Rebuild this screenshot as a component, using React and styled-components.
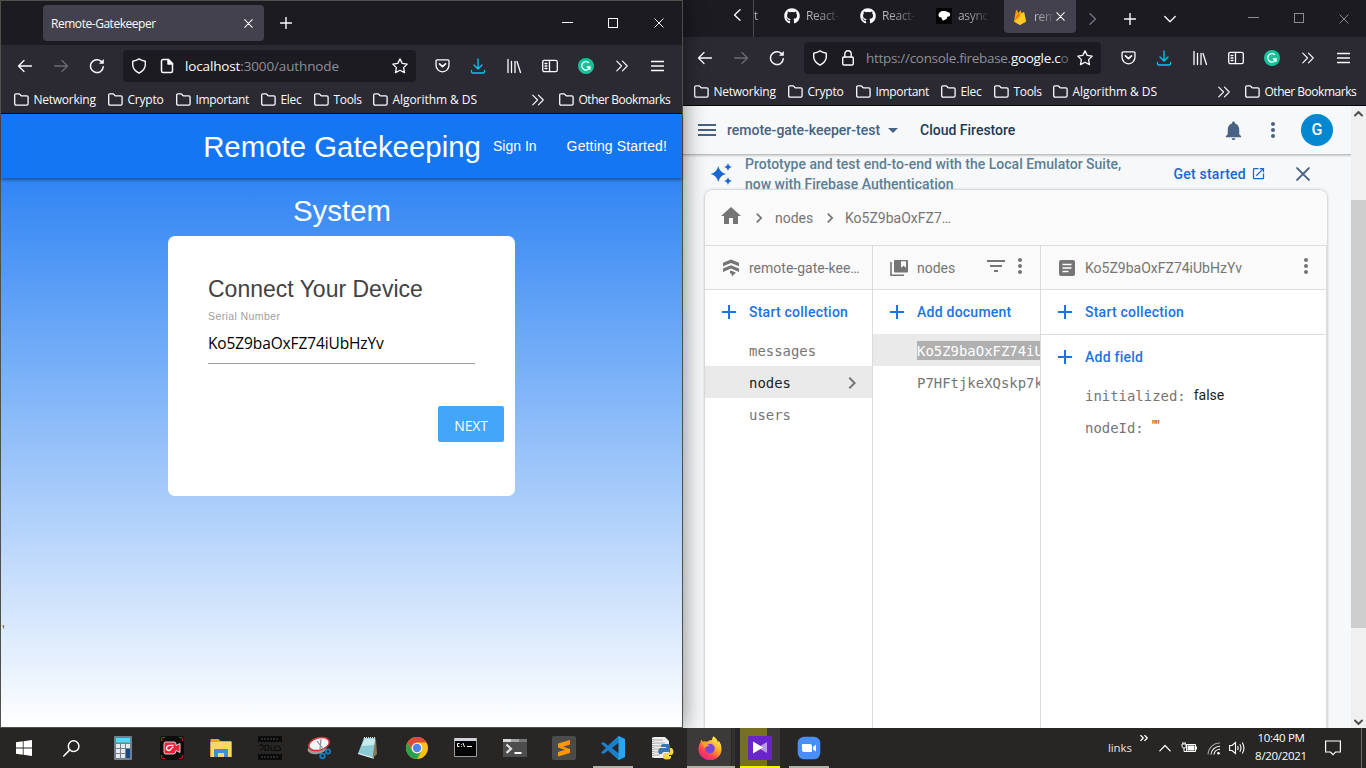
import React from "react";
import styled, { createGlobalStyle, css } from "styled-components";
import { FaGithub } from "react-icons/fa";
import {
  MdHome, MdChevronRight, MdFilterList, MdMoreVert, MdNotifications,
  MdOpenInNew, MdArrowDropDown, MdMenu, MdAdd,
} from "react-icons/md";

const ui = `"Open Sans", "Noto Sans", sans-serif`;
const arial = `"Liberation Sans", Arial, sans-serif`;
const roboto = `Roboto, sans-serif`;
const mono = `"DejaVu Sans Mono", "Liberation Mono", monospace`;

const GlobalStyle = createGlobalStyle`
  * { box-sizing: border-box; }
  body { margin: 0; overflow: hidden; background: #272625; }
  svg { display: block; flex: none; }
`;

const Screen = styled.div`
  width: 1366px;
  height: 768px;
  display: grid;
  grid-template-rows: 728px 40px;
  overflow: hidden;
  font-family: ${ui};
`;
const Desktop = styled.div`
  display: grid;
  grid-template-columns: 683px 683px;
  overflow: hidden;
`;
const Window = styled.section`
  display: flex;
  flex-direction: column;
  min-width: 0;
  height: 728px;
  background: #2b2a33;
  ${(p) => p.$front && css`
    position: relative;
    z-index: 2;
    border: 1px solid #4f504c;
    box-shadow: 0 0 22px rgba(0, 0, 0, 0.48);
  `}
`;

/* ---------- browser chrome ---------- */
const TabBar = styled.div`
  display: flex;
  flex: none;
  align-items: center;
  height: ${(p) => p.$h}px;
  background: #1c1b22;
`;
const WideTab = styled.div`
  display: flex;
  align-items: center;
  justify-content: space-between;
  width: 221px;
  height: 36px;
  margin-left: 42px;
  padding: 0 11px 0 8px;
  border-radius: 4px;
  background: #42414d;
  color: #fbfbfe;
  font-size: 12px;
  letter-spacing: -0.46px;
`;
const Cell = styled.div`
  display: flex;
  flex: none;
  align-items: center;
  justify-content: center;
  width: ${(p) => p.$w}px;
  height: 100%;
  color: ${(p) => p.$c || "#fbfbfe"};
`;
const Spacer = styled.div`
  flex: 1;
`;
const ScrollLeft = styled(Cell)`
  justify-content: flex-end;
  padding: 0 10px 7px 0;
  border-right: 1px solid #4a4950;
`;
const SmallTab = styled.div`
  display: flex;
  align-items: center;
  gap: 6px;
  width: ${(p) => p.$w}px;
  height: 32px;
  margin-bottom: 6px;
  color: #fbfbfe;
  font-size: 12px;
`;
const FadedTitle = styled.span`
  width: ${(p) => p.$w}px;
  white-space: nowrap;
  color: transparent;
  letter-spacing: -0.3px;
  background: linear-gradient(90deg, #c4c4c9, #8f8e95 50%, rgba(100, 100, 105, 0.05) 90%);
  background-clip: text;
  -webkit-background-clip: text;
`;
const ActiveTab = styled(SmallTab)`
  height: 37px;
  margin-bottom: 8px;
  padding: 4px 0 0 8px;
  border-radius: 4px;
  background: #42414d;
`;
const TabClose = styled.div`
  margin-left: -7px;
`;
const NavBar = styled.div`
  display: flex;
  flex: none;
  align-items: center;
  height: 41px;
  padding: ${(p) => p.$pad};
`;
const UrlBar = styled.div`
  display: flex;
  align-items: center;
  flex: 1;
  min-width: 0;
  height: 32px;
  margin: 0 ${(p) => p.$mr}px 0 ${(p) => p.$ml}px;
  padding: 0 8px 0 8px;
  border-radius: 4px;
  background: #1c1b22;
`;
const UrlText = styled.span`
  flex: 1;
  min-width: 0;
  margin: 1px 0 0 10px;
  white-space: nowrap;
  font-size: 13.5px;
  letter-spacing: ${(p) => p.$ls}px;
  color: #8f8f97;
  b { font-weight: 400; color: #fbfbfe; }
  i { font-style: normal; color: #6b6a72; }
`;
const UrlIcon = styled.div`
  display: flex;
  flex: none;
  justify-content: center;
  width: 16px;
  margin-right: ${(p) => p.$mr || 0}px;
  color: #fbfbfe;
`;
const Bookmarks = styled.div`
  display: flex;
  flex: none;
  align-items: center;
  height: 28px;
  padding: 0 ${(p) => p.$r}px 0 ${(p) => p.$l}px;
  border-bottom: 1px solid #08080a;
`;
const Bookmark = styled.div`
  display: flex;
  flex: none;
  align-items: center;
  gap: 4.5px;
  width: ${(p) => p.$w}px;
  white-space: nowrap;
  color: #fbfbfe;
  font-size: 12px;
  letter-spacing: ${(p) => p.$ls}px;
`;

const Svg = ({ s = 16, w, h, vb, sw = 1.3, children, ...rest }) => (
  <svg width={w || s} height={h || s} viewBox={vb || "0 0 16 16"} fill="none"
    stroke="currentColor" strokeWidth={sw} strokeLinecap="round" strokeLinejoin="round" {...rest}>
    {children}
  </svg>
);
const Back = () => <Svg><path d="M1.5 8h13M7 2.5 1.5 8 7 13.5" /></Svg>;
const Forward = () => <Svg><path d="M14.5 8h-13M9 2.5 14.5 8 9 13.5" /></Svg>;
const Reload = () => (
  <Svg sw={1.5}><path d="M14.3 8.8A6.4 6.4 0 1 1 12.2 3.4" /><path d="M14.8 1v4.8H10z" fill="currentColor" stroke="none" /></Svg>
);
const Shield = () => <Svg sw={1.4}><path d="M8 .9q3 2 5.800 2.100.5 0 .5.600v3C14.300 10.400 11.900 13.200 8 15.200 4.100 13.200 1.700 10.400 1.700 6.600v-3q0-.6.5-.6Q5 2.900 8 .900z" /></Svg>;
const Page = () => <Svg sw={1.5}><path d="M9.500 1.500H4A1.500 1.500 0 0 0 2.500 3v10A1.500 1.500 0 0 0 4 14.500h8a1.500 1.500 0 0 0 1.500-1.500V5.500z" /><path d="M9 1.500v4.500h4.500z" fill="currentColor" /></Svg>;
const Lock = () => <Svg sw={1.4}><rect x="2.7" y="7" width="10.6" height="8" rx="1.3" /><path d="M4.800 7V4a3.200 3.200 0 0 1 6.400 0v3" /></Svg>;
const Star = () => <Svg><path d="m8 .9 2.200 4.500 5 .7-3.600 3.500.9 5L8 12.200l-4.500 2.400.9-5L.8 6.100l5-.7z" /></Svg>;
const Pocket = () => <Svg s={15} sw={1.4}><path d="M2.300 2h11.400c.7 0 1.200.5 1.200 1.200v4.600a6.900 6.900 0 0 1-13.800 0V3.200C1.100 2.500 1.600 2 2.300 2z" /><path d="M4.800 6.200 8 9.300l3.200-3.100" strokeWidth="1.800" /></Svg>;
const Download = () => <Svg><path d="M8 .8v10M4 7l4 4 4-4M1.500 12.500v1.200c0 .8.5 1.300 1.300 1.300h10.400c.8 0 1.300-.5 1.300-1.300v-1.200" /></Svg>;
const Library = () => <Svg><path d="M2 1.500v13M5.500 3.500v11M9 3.500v11M11 3.500l3.500 11" /></Svg>;
const Sidebar = () => <Svg><rect x=".7" y="2.3" width="14.6" height="11.4" rx="1.6" /><path d="M7.500 2.500v11M3 5.500h2M3 8h2M3 10.500h2" /></Svg>;
const Grammarly = () => (
  <svg width="16" height="16" viewBox="0 0 16 16">
    <circle cx="8" cy="8" r="8" fill="#15c39a" />
    <path d="M10.900 4.800A4.200 4.200 0 1 0 12 9H8.800M12 8.700v3" fill="none" stroke="#fff" strokeWidth="1.3" />
  </svg>
);
const More = () => <Svg w={14} h={14}><path d="M2 2.500 7.500 8 2 13.500M8.500 2.500 14 8l-5.500 5.500" /></Svg>;
const Burger = () => <Svg w={13} h={16} vb="1.5 0 13 16"><path d="M2 3.500h12M2 8h12M2 12.500h12" /></Svg>;
const Folder = () => (
  <Svg w={15} h={13} vb="0 0 15 13">
    <path d="M.7 10.800V2c0-.7.5-1.200 1.200-1.200H5c1.300 0 1.300 2 2.600 2h5.200c.8 0 1.300.5 1.300 1.200v6.800c0 .8-.5 1.300-1.300 1.300H2C1.200 12.100.7 11.600.7 10.800z" />
  </Svg>
);
const Cross = ({ s = 9, sw = 1.2 }) => <Svg s={s} vb="0 0 10 10" sw={sw}><path d="M.8.8 9.200 9.200M9.200.8.8 9.200" /></Svg>;
const Plus = () => <Svg s={12} vb="0 0 12 12" sw={1.4}><path d="M6 .5v11M.5 6h11" /></Svg>;
const Min = () => <Svg w={11} h={11} vb="0 0 11 11" sw={1} shapeRendering="crispEdges"><path d="M.5 4.500h10" /></Svg>;
const Max = () => <Svg w={11} h={11} vb="0 0 11 11" sw={1} shapeRendering="crispEdges"><path d="M.5.5h9v9h-9z" /></Svg>;
const chevrons = { l: "M9 .8 3.500 6 9 11.200", r: "M3 .8 8.500 6 3 11.200", d: "M.8 3.500 6 8.700l5.200-5.200" };
const Chev = ({ dir }) => <Svg w={12} h={12} vb="0 0 12 12"><path d={chevrons[dir]} /></Svg>;

const Toolbar = ({ pad, ml, mr, children }) => (
  <NavBar $pad={pad}>
    <Cell $w={36}><Back /></Cell>
    <Cell $w={36} $c="#6c6b73"><Forward /></Cell>
    <Cell $w={36}><Reload /></Cell>
    <UrlBar $ml={ml} $mr={mr}>{children}<UrlIcon><Star /></UrlIcon></UrlBar>
    <Cell $w={36}><Pocket /></Cell>
    <Cell $w={36} $c="#00c8ee"><Download /></Cell>
    <Cell $w={36}><Library /></Cell>
    <Cell $w={36}><Sidebar /></Cell>
    <Cell $w={36}><Grammarly /></Cell>
    <Cell $w={35}><More /></Cell>
    <Cell $w={37}><Burger /></Cell>
  </NavBar>
);
const bookmarks = [
  ["Networking", 94, -0.25], ["Crypto", 68, -0.22], ["Important", 85, -0.33],
  ["Elec", 53, -0.3], ["Tools", 59, -0.35], ["Algorithm & DS", 120, -0.06],
];
const BookmarkBar = ({ l, r }) => (
  <Bookmarks $l={l} $r={r}>
    {bookmarks.map(([t, w, ls]) => <Bookmark key={t} $w={w} $ls={ls}><Folder />{t}</Bookmark>)}
    <Spacer />
    <Cell $w={43}><More /></Cell>
    <Bookmark $w={112} $ls={-0.48}><Folder />Other Bookmarks</Bookmark>
  </Bookmarks>
);

/* ---------- device page ---------- */
const DevicePage = styled.main`
  flex: 1;
  font-family: ${arial};
  background: linear-gradient(#1877f2, #ffffff);
`;
const SiteHeader = styled.header`
  display: flex;
  height: 64px;
  padding-left: 202px;
  background: #1476f2;
  box-shadow: 0 2px 3px rgba(0, 0, 0, 0.38);
  color: #fff;
  line-height: 64px;
  white-space: nowrap;
`;
const Brand = styled.div`
  width: 278px;
  padding-top: 1px;
  font-size: 29.4px;
  text-align: center;
  white-space: normal;
`;
const NavLink = styled.a`
  margin-left: ${(p) => p.$ml}px;
  font-size: 14px;
  letter-spacing: ${(p) => p.$ls}px;
`;
const Card = styled.div`
  display: flex;
  flex-direction: column;
  width: 347px;
  height: 260px;
  margin: 58px 0 0 167px;
  padding: 39px 11px 0 40px;
  border-radius: 7px;
  background: #fff;
`;
const CardTitle = styled.h1`
  margin: 0;
  font-size: 23px;
  line-height: 28px;
  font-weight: 400;
  color: #424242;
`;
const FieldLabel = styled.label`
  margin-top: 6px;
  font-size: 10.5px;
  line-height: 14px;
  letter-spacing: 0.4px;
  color: #9e9e9e;
`;
const Field = styled.div`
  width: 267px;
  height: 41px;
  border-bottom: 1px solid #9e9e9e;
  font: 15.5px/41px ${ui};
  letter-spacing: -0.12px;
  color: #000;
`;
const NextButton = styled.button`
  align-self: flex-end;
  width: 66px;
  height: 36px;
  margin-top: 42px;
  padding: 2px 0 0;
  border: 0;
  border-radius: 2px;
  background: #42a5f5;
  color: #fff;
  font: 14px ${ui};
  letter-spacing: -0.2px;
`;
const Speck = styled.div`
  margin-top: 122px;
  padding-left: 1px;
  height: 12px;
  font: bold 10px/12px ${arial};
  color: #8a6238;
`;

/* ---------- firestore console ---------- */
const Console = styled.main`
  display: grid;
  grid-template-columns: 668px 15px;
  flex: 1;
  min-height: 0;
  background: #f6f8fa;
  font: 14px/20px ${roboto};
`;
const ConsoleBody = styled.div`
  display: flex;
  flex-direction: column;
  min-height: 0;
  overflow: hidden;
`;
const ConsoleHeader = styled.header`
  display: flex;
  flex: none;
  align-items: center;
  height: 49px;
  padding: 0 18px 0 12px;
  border-bottom: 1px solid #bcbebf;
  box-shadow: 0 1px 2px rgba(0, 0, 0, 0.18);
  color: #476282;
  font-weight: 500;
`;
const ProjectName = styled.span`
  margin-left: 8px;
  width: 154px;
  white-space: nowrap;
`;
const PageName = styled.span`
  margin-left: 15px;
  flex: 1;
  color: #1b3a57;
`;
const Avatar = styled.div`
  display: grid;
  place-items: center;
  width: 32px;
  height: 32px;
  margin-left: 8px;
  border-radius: 50%;
  background: #0288d1;
  color: #fff;
  font-size: 16px;
`;
const Banner = styled.div`
  display: flex;
  align-items: center;
  flex: none;
  height: 35px;
  padding: 2px 41px 0 26px;
`;
const BannerText = styled.p`
  width: 440.5px;
  margin: 0;
  padding: 0 40px 0 12px;
  font-weight: 500;
  color: #5d7f92;
`;
const StartLink = styled.a`
  display: flex;
  align-items: center;
  gap: 5px;
  flex: 1;
  font-weight: 500;
  letter-spacing: 0.22px;
  color: #1967d2;
`;
const Panel = styled.div`
  position: relative;
  display: flex;
  flex-direction: column;
  flex: 1;
  width: 622px;
  margin-left: 22px;
  border-radius: 8px 8px 0 0;
  background: #fff;
  box-shadow: 0 0 3px rgba(0, 0, 0, 0.32);
  color: #757575;
`;
const Breadcrumb = styled.div`
  display: flex;
  align-items: center;
  height: 56px;
  padding-left: 14px;
  border-bottom: 1px solid #dcdcdc;
  border-radius: 8px 8px 0 0;
  background: #fafafa;
  > svg { margin-bottom: 4px; }
`;
const Crumb = styled.span`
  width: ${(p) => p.$w}px;
  overflow: hidden;
  white-space: nowrap;
  text-overflow: ellipsis;
`;
const Columns = styled.div`
  display: grid;
  grid-template-columns: 168px 168px 286px;
  flex: 1;
`;
const Column = styled.div`
  overflow: hidden;
  border-right: 1px solid #dcdcdc;
`;
const ColumnHead = styled.div`
  display: flex;
  align-items: center;
  height: 44px;
  padding: 0 ${(p) => p.$r || 12}px 0 16px;
  border-bottom: 1px solid #dcdcdc;
  background: #fafafa;
  white-space: nowrap;
  span { flex: 1; margin-left: 8px; overflow: hidden; text-overflow: ellipsis; }
  span ~ svg { margin-bottom: 3px; }
`;
const Action = styled.button`
  display: flex;
  align-items: center;
  gap: 8px;
  width: 100%;
  height: 45px;
  padding: 0 0 0 12px;
  border: 0;
  border-bottom: 1px solid ${(p) => (p.$line ? "#dcdcdc" : "transparent")};
  background: none;
  color: #1a73e8;
  font: 500 14px/20px ${roboto};
  letter-spacing: 0.24px;
`;
const Entry = styled.div`
  display: flex;
  align-items: center;
  height: 32px;
  padding: 1px 0 0 44px;
  white-space: nowrap;
  font-family: ${mono};
  font-size: 13.95px;
  color: ${(p) => (p.$dark ? "#212121" : "#757575")};
  background: ${(p) => (p.$on ? "#eaeaea" : "none")};
  span { flex: 1; }
  mark { padding-top: 1px; background: #b0b0b0; color: #fff; line-height: 18px; }
`;
const EntryList = styled.div`
  margin-top: -1px;
`;
const FieldValue = styled.span`
  margin-left: 8px;
  padding-bottom: 2px;
  font: 14px/20px ${roboto};
  color: #212121;
`;
const StringValue = styled(FieldValue)`
  padding-bottom: 3px;
  font-weight: 500;
  letter-spacing: -0.4px;
  color: #b8621b;
`;
const ScrollTrack = styled.div`
  display: flex;
  flex-direction: column;
  justify-content: space-between;
  align-items: center;
  padding: 4px 0 2px;
  background: #f0f0f0;
  color: #505050;
`;
const ScrollThumb = styled.div`
  width: 15px;
  height: 428px;
  margin: -9px 0 0;
  background: #cdcdcd;
`;

const Sparkle = () => (
  <svg width="24" height="24" viewBox="0 0 24 24" fill="#1967d2">
    <path d="M9.300 4Q10.800 10.500 17 12q-6.200 1.500-7.700 8Q7.800 13.500 1.600 12 7.800 10.500 9.300 4zM19 1q.7 3.300 4 4-3.300.7-4 4-.7-3.300-4-4 3.300-.7 4-4zM19 15q.7 3.300 4 4-3.300.7-4 4-.7-3.300-4-4 3.300-.7 4-4z" />
  </svg>
);
const FirestoreIcon = () => (
  <svg width="20" height="18" viewBox="0 0 20 18" fill="#757575">
    <path d="M10 .5 18 3.800v3.500L10 4 2 7.300V3.800zM10 6.300l8 3.300v3.300L10 9.600l-8 3.300V9.600zM10 11.600l5 2.100-4.300 3.800V15L9 14.300v-2.200z" />
  </svg>
);
const CollectionIcon = () => (
  <svg width="20" height="18" viewBox="0 0 20 18">
    <path d="M2 3v13.200h13" fill="none" stroke="#757575" strokeWidth="1.6" />
    <path d="M6 1h12q1 0 1 1v10.500q0 1-1 1H6q-1 0-1-1V2q0-1 1-1zm6 1.200v6.500l2.500-1.900L17 8.700V2.200z" fill="#757575" fillRule="evenodd" />
  </svg>
);
const DocIcon = () => (
  <svg width="20" height="16" viewBox="0 0 20 16">
    <rect x="2" width="16" height="16" rx="2" fill="#757575" />
    <path d="M5.500 4.500h9M5.500 8h9M5.500 11.500h6" stroke="#fff" strokeWidth="1.4" />
  </svg>
);

/* ---------- taskbar ---------- */
const Taskbar = styled.footer`
  display: flex;
  height: 40px;
  background: #272625;
  color: #fff;
  font-size: 12px;
`;
const TaskCell = styled.div`
  display: flex;
  flex: none;
  align-items: center;
  justify-content: center;
  width: ${(p) => p.$w || 49}px;
  padding-right: ${(p) => p.$pr || 0}px;
`;
const RunningApp = styled.div`
  display: flex;
  align-items: center;
  justify-content: center;
  width: ${(p) => p.$w || 40}px;
  height: 40px;
  padding-top: 2px;
  padding-right: ${(p) => p.$pr || 0}px;
  border-bottom: 2px solid ${(p) => p.$line || "#b3afa9"};
  background: ${(p) => p.$bg || "none"};
`;
const TrayLabel = styled.div`
  width: 32px;
  line-height: 40px;
  font-size: 11.5px;
  letter-spacing: -0.1px;
  color: #e4e4e4;
`;
const TrayChevrons = styled.div`
  width: 16px;
  padding-top: 7px;
`;
const Clock = styled.div`
  width: 62px;
  padding-top: 1px;
  font-size: 11.5px;
  line-height: 18px;
  letter-spacing: -0.3px;
  text-align: center;
  white-space: nowrap;
`;
const ShowDesktop = styled.div`
  width: 5px;
  border-left: 1px solid #6c6b6a;
`;

const I = ({ s = 24, children }) => <svg width={s} height={s} viewBox="0 0 24 24" fill="none">{children}</svg>;
const appIcons = [
  <I><rect x="3" y="0" width="18" height="24" rx="1" fill="#74818c" /><rect x="5" y="2" width="14" height="4.5" fill="#4ddcff" />
    <path d="M5 8h4v4H5zM10 8h4v4h-4zM15 8h4v4h-4zM5 13h4v4H5zM10 13h4v4h-4zM5 18h4v4H5zM10 18h4v4h-4z" fill="#e4eaee" /><path d="M15 13h4v9h-4z" fill="#104a88" /></I>,
  <I><rect width="24" height="24" rx="3" fill="#0c0c0c" /><path d="M1.500 5V3q0-1.500 1.500-1.500h2M19 1.500h2q1.500 0 1.500 1.500v2M1.500 19v2q0 1.500 1.500 1.500h2M19 22.500h2q1.500 0 1.500-1.500v-2" stroke="#b32625" strokeWidth="1.2" />
    <path d="M5.500 6H14q2 0 2 2v1.500l4-2v9l-4-2q0 3.500-2.500 3.500h-8Q4 18 4 16V8q0-2 1.500-2z" fill="#e22338" stroke="#fff" strokeWidth=".8" />
    <path d="M13.500 9.500Q7 8.500 6.500 12q0 2.500 2.500 2.500 1.500 0 2.500-2.200 1-1.300 2-.8" stroke="#fff" strokeWidth="1.3" /></I>,
  <I><path d="M1.500 3h8l2 2h11v16h-21z" fill="#e9a61c" /><path d="M1.500 6h21v15h-21z" fill="#fcd669" /><path d="M5 21v-8h14v8h-4v-4H9v4z" fill="#3f8fd2" /></I>,
  <I><path d="M0 0h24v6H0zM0 18h24v6H0z" fill="#0b0b0b" /><path d="M3 3h18M3 21h18" stroke="#343434" strokeWidth="1.5" strokeDasharray="2 1" />
    <path d="M1 10q3-3 4 0t-3 4M7 9.500q4-1 4 2t-4 3zM13 9.500v5h4v-5M19 9.500q5 2 3 5h-4" stroke="#0b0b0b" strokeWidth="1.1" /></I>,
  <I><ellipse cx="10" cy="13" rx="9.5" ry="5" fill="#999b9e" transform="rotate(-8 10 13)" /><ellipse cx="12" cy="8" rx="10.5" ry="6.2" fill="#f5f6f8" stroke="#cf2f35" strokeWidth="1.5" transform="rotate(-15 12 8)" />
    <path d="M10 5l7 9M14 3l-1 10" stroke="#8a8f96" strokeWidth="1.2" /><circle cx="15.5" cy="20" r="2.3" stroke="#1781c8" strokeWidth="1.7" /><circle cx="21" cy="15.5" r="2.2" stroke="#1781c8" strokeWidth="1.7" /></I>,
  <I><path d="M7 2 20 4l1 14-4 4z" fill="#8b7750" /><path d="M8 2h11.500l-3 20L2 17.500z" fill="#8ccbd4" /><path d="M8.500 3h10.500l-1 6L5.500 10z" fill="#c7eaee" /><path d="M2 17.500 17 22l1 0" stroke="#f0f6f6" strokeWidth="1.2" /><path d="M8 1.800h12" stroke="#dfe5e5" strokeWidth="1.4" strokeDasharray="1 1" /></I>,
  <I><circle cx="12" cy="12" r="11" fill="#fbc116" /><path d="M2.500 6.500A11 11 0 0 1 21.500 6.500H12a5.500 5.500 0 0 0-5 7.500z" fill="#de4a3c" /><path d="M2.500 6.500A11 11 0 0 0 12 23l4.500-8a5.500 5.500 0 0 1-9.500-.5z" fill="#27a050" />
    <circle cx="12" cy="12" r="5.3" fill="#fff" /><circle cx="12" cy="12" r="4.2" fill="#4a86ee" /></I>,
  <I><path d="M.5 2.500h22v18H.5z" fill="#050505" stroke="#9b9da0" strokeWidth="1" /><path d="M.5 2h22v3H.5z" fill="#d0d4d8" /><path d="M5.500 7.500h-2v3h2M7.500 8v.7M7.500 10v.7M9 7l1.500 4M13 10.500h5" stroke="#fff" strokeWidth="1" /></I>,
  <I><path d="M0 3h24v18H0z" fill="#4d4d4d" /><path d="M0 3h16v3H0z" fill="#dadada" /><path d="M8 3h8v3H8z" fill="#a3a3a3" /><path d="M16 3h8v3h-8z" fill="#777" /><path d="m3.500 8.500 4.500 4.200-4.500 4.200" stroke="#e3e3e3" strokeWidth="2.2" /><path d="M11.500 17h7" stroke="#fff" strokeWidth="2" /></I>,
  <I><rect width="24" height="24" rx="2" fill="#4b4b4b" /><path d="M18 4v4.500l-7 2.300 7 2.200v4L6 20.500V16l7-2.200-7-2.300V7.500z" fill="#ff9800" /></I>,
];
const VsCode = () => <I><path d="M17.500 0 24 3v18l-6.500 3L7 14.500 2.500 18 0 16.500 5 12 0 7.500 2.500 6 7 9.500zM18 6.500 11 12l7 5.500z" fill="#1b80c9" fillRule="evenodd" /><path d="M17.500 0 24 3v18l-6.500 3z" fill="#2ba5f0" /></I>;
const PyFile = () => (
  <I><path d="M2 1h13l4 4v17H2z" fill="#efefef" /><path d="M4 4h9M4 7h11M4 10h12M4 13h8M4 16h6M4 19h6" stroke="#a9a9a9" strokeWidth="1" /><path d="M3 1v21" stroke="#666" strokeDasharray="1 1" />
    <path d="M13 8h5q2 0 2 2v4q0 2-2 2h-4q-2 0-2 2H9q-2-4 1-6h6v-1h-5V10q0-2 2-2z" fill="#3a75ab" /><path d="M20 12h2q3 4 0 7h-5v1h4v2q-1 1.500-4 1.500T13 22v-3q0-2 2-2h3q2 0 2-2z" fill="#fbd343" /></I>
);
const Firefox = () => (
  <I><defs>
    <linearGradient id="ff" x1="19" y1="2" x2="5" y2="22" gradientUnits="userSpaceOnUse"><stop stopColor="#fff14a" /><stop offset=".45" stopColor="#ff9a2a" /><stop offset=".75" stopColor="#ff4155" /><stop offset="1" stopColor="#f0257f" /></linearGradient></defs>
    <path d="M15.500.2q4 3 4.300 5.800 1-.2 1-1.500 3 4.500 2.700 9A11.500 11 0 0 1 .5 13q0-4 2-6.500L3 3.500l2 2.200q2-1 4 0Q11 4 14 4q0-2 1.500-3.800z" fill="url(#ff)" />
    <circle cx="12" cy="12.500" r="4.800" fill="#7a46d8" /><path d="M3 6q5 0 8.500 4-4 0-5 2-1-4-3.500-6z" fill="#ff9f2e" /></I>
);
const Player = () => <I><rect width="24" height="24" rx="1.5" fill="#6a24cc" /><path d="M19 6v11l-9-5.500z" fill="#b99be6" /><path d="M5 5.500v12l10-6z" fill="#fff" /></I>;
const ZoomApp = () => <I><rect x=".7" y=".7" width="22.6" height="22.6" rx="6.5" fill="#4a8ff7" /><path d="M5 8h8q2 0 2 2v6H7q-2 0-2-2zM16 11l3-2.500v7L16 13.500z" fill="#fff" /></I>;

export default function App() {
  return (
    <>
      <GlobalStyle />
      <Screen>
        <Desktop>
          <Window $front>
            <TabBar $h={44}>
              <WideTab>Remote-Gatekeeper<Cross /></WideTab>
              <Cell $w={43}><Plus /></Cell>
              <Spacer />
              <Cell $w={46}><Min /></Cell>
              <Cell $w={46}><Max /></Cell>
              <Cell $w={46}><Cross s={10} sw={1} /></Cell>
            </TabBar>
            <Toolbar pad="0 6px 0 6px" ml={8} mr={8}>
              <UrlIcon $mr={12}><Shield /></UrlIcon>
              <UrlIcon><Page /></UrlIcon>
              <UrlText $ls={-0.14}><b>localhost</b>:3000/authnode</UrlText>
            </Toolbar>
            <BookmarkBar l={13} r={11} />
            <DevicePage>
              <SiteHeader>
                <Brand>Remote Gatekeeping System</Brand>
                <NavLink $ml={12} $ls={0}>Sign In</NavLink>
                <NavLink $ml={30} $ls={0.15}>Getting Started!</NavLink>
              </SiteHeader>
              <Card>
                <CardTitle>Connect Your Device</CardTitle>
                <FieldLabel>Serial Number</FieldLabel>
                <Field>Ko5Z9baOxFZ74iUbHzYv</Field>
                <NextButton>NEXT</NextButton>
              </Card>
              <Speck>,</Speck>
            </DevicePage>
          </Window>

          <Window>
            <TabBar $h={37}>
              <ScrollLeft $w={71}><Chev dir="l" /></ScrollLeft>
              <SmallTab $w={30}><FadedTitle $w={9}>t</FadedTitle></SmallTab>
              <SmallTab $w={76}><FaGithub size={16} /><FadedTitle $w={38}>React-</FadedTitle></SmallTab>
              <SmallTab $w={76}><FaGithub size={16} /><FadedTitle $w={38}>React-</FadedTitle></SmallTab>
              <SmallTab $w={68}>
                <svg width="16" height="16" viewBox="0 0 16 16"><path d="M0 0h16v16H0z" fill="#000" /><path d="M2.500 6.500q1-4 5.500-3.500t6 2.500q1 2.500-3 3.500v1.500L8.500 12q-1.500 1-2.500-.5l-.5-2Q2 9.500 2.500 6.500z" fill="#fff" /></svg>
                <FadedTitle $w={34}>async</FadedTitle>
              </SmallTab>
              <ActiveTab $w={72}>
                <svg width="16" height="16" viewBox="0 0 16 16"><path d="M2 12.500 4 1q.3-.7.7 0L6.500 4 8 1.800q.4-.5.7 0l1.500 3 1.800-1.500L14 12.500 8 16z" fill="#ffa000" /><path d="m2 12.500 8-8.500 2-1 2 9.500L8 16z" fill="#ffca28" /><path d="m2 12.500 4.500-8.500L8 7z" fill="#f57c00" /></svg>
                <FadedTitle $w={23}>rem</FadedTitle>
                <TabClose><Cross /></TabClose>
              </ActiveTab>
              <Cell $w={34} $c="#77767d"><Chev dir="r" /></Cell>
              <Cell $w={40}><Plus /></Cell>
              <Cell $w={40}><Chev dir="d" /></Cell>
              <Spacer />
              <Cell $w={46} $c="#8b8a90"><Min /></Cell>
              <Cell $w={46} $c="#8b8a90"><Max /></Cell>
              <Cell $w={44} $c="#8b8a90"><Cross s={10} sw={1} /></Cell>
            </TabBar>
            <Toolbar pad="0 4px 0 4px" ml={9} mr={9}>
              <UrlIcon $mr={12}><Shield /></UrlIcon>
              <UrlIcon><Lock /></UrlIcon>
              <UrlText $ls={-0.3}>https://console.firebase.<b>google.c</b><i>o</i></UrlText>
            </Toolbar>
            <BookmarkBar l={11} r={9} />
            <Console>
              <ConsoleBody>
                <ConsoleHeader>
                  <MdMenu size={24} />
                  <ProjectName>remote-gate-keeper-test</ProjectName>
                  <MdArrowDropDown size={24} />
                  <PageName>Cloud Firestore</PageName>
                  <Cell $w={40} $c="#476282"><MdNotifications size={23} /></Cell>
                  <Cell $w={40} $c="#476282"><MdMoreVert size={24} /></Cell>
                  <Avatar>G</Avatar>
                </ConsoleHeader>
                <Banner>
                  <Sparkle />
                  <BannerText>Prototype and test end-to-end with the Local Emulator Suite, now with Firebase Authentication</BannerText>
                  <StartLink>Get started<MdOpenInNew size={15} /></StartLink>
                  <Cell $w={14} $c="#476282"><Cross s={14} sw={1.4} /></Cell>
                </Banner>
                <Panel>
                  <Breadcrumb>
                    <MdHome size={24} />
                    <Cell $w={32} $c="#757575"><MdChevronRight size={20} /></Cell>
                    <Crumb $w={40}>nodes</Crumb>
                    <Cell $w={30} $c="#757575"><MdChevronRight size={20} /></Cell>
                    <Crumb $w={108}>Ko5Z9baOxFZ74iUbHzYv</Crumb>
                  </Breadcrumb>
                  <Columns>
                    <Column>
                      <ColumnHead><FirestoreIcon /><span>remote-gate-keeper-test</span></ColumnHead>
                      <Action><MdAdd size={24} />Start collection</Action>
                      <EntryList>
                        <Entry>messages</Entry>
                        <Entry $on $dark><span>nodes</span><Cell $w={40} $c="#757575"><MdChevronRight size={24} /></Cell></Entry>
                        <Entry>users</Entry>
                      </EntryList>
                    </Column>
                    <Column>
                      <ColumnHead $r={8}><CollectionIcon /><span>nodes</span><MdFilterList size={24} /><MdMoreVert size={24} /></ColumnHead>
                      <Action><MdAdd size={24} />Add document</Action>
                      <EntryList>
                        <Entry $on><mark>Ko5Z9baOxFZ74iUbHzYv</mark></Entry>
                        <Entry>P7HFtjkeXQskp7k</Entry>
                      </EntryList>
                    </Column>
                    <Column>
                      <ColumnHead $r={8}><DocIcon /><span>Ko5Z9baOxFZ74iUbHzYv</span><MdMoreVert size={24} /></ColumnHead>
                      <Action $line><MdAdd size={24} />Start collection</Action>
                      <Action><MdAdd size={24} />Add field</Action>
                      <EntryList>
                        <Entry>initialized:<FieldValue>false</FieldValue></Entry>
                        <Entry>nodeId:<StringValue>""</StringValue></Entry>
                      </EntryList>
                    </Column>
                  </Columns>
                </Panel>
              </ConsoleBody>
              <ScrollTrack>
                <Svg w={9} h={7} vb="0 0 9 7" sw={2}><path d="m1 5.500 3.500-3.500L8 5.500" /></Svg>
                <ScrollThumb />
                <Svg w={9} h={7} vb="0 0 9 7" sw={2}><path d="M1 1.500 4.500 5 8 1.500" /></Svg>
              </ScrollTrack>
            </Console>
          </Window>
        </Desktop>

        <Taskbar>
          <TaskCell $w={48}>
            <svg width="16" height="16" viewBox="0 0 16 16" fill="#fff"><path d="M0 2.300 6.800 1.300v6.300H0zM7.600 1.200 16 0v7.600H7.600zM0 8.400h6.800v6.300L0 13.700zM7.600 8.400H16V16l-8.400-1.200z" /></svg>
          </TaskCell>
          <TaskCell $w={50} $pr={3}><Svg s={17} sw={1.4}><circle cx="10" cy="5.800" r="5" /><path d="M6.400 9.300.7 15" /></Svg></TaskCell>
          {appIcons.map((icon, i) => <TaskCell key={i}>{icon}</TaskCell>)}
          <TaskCell><RunningApp><VsCode /></RunningApp></TaskCell>
          <TaskCell><PyFile /></TaskCell>
          <TaskCell><RunningApp $w={48} $pr={1} $bg="linear-gradient(90deg,#3b3a38 44px,#272625 44px,#272625 45px,#33322f 45px)"><Firefox /></RunningApp></TaskCell>
          <TaskCell><RunningApp $line="#fff100" $bg="linear-gradient(90deg,#777023 27px,#3b3a38 27px)"><Player /></RunningApp></TaskCell>
          <TaskCell><RunningApp><ZoomApp /></RunningApp></TaskCell>
          <Spacer />
          <TrayLabel>links</TrayLabel>
          <TrayChevrons><Svg w={8} h={6} vb="0 0 8 6" sw={1.2}><path d="M.8.5 3.300 3 .8 5.500M4.800.5 7.300 3 4.800 5.500" /></Svg></TrayChevrons>
          <TaskCell $w={18}><Svg w={12} h={8} vb="0 0 12 8" sw={1.2}><path d="M.8 6.800 6 1.500l5.200 5.300" /></Svg></TaskCell>
          <TaskCell $w={30}>
            <svg width="16" height="12" viewBox="0 0 16 12"><path d="M5.500 2.500h9v7h-9zM1 2h4v2.500Q5 6 3 6T1 4.500zM2 0v2M4 0v2M3 6v3.500h2.500" fill="none" stroke="#fff" /><path d="M6.500 3.500h7v5h-7zM15 4.500h1v3h-1z" fill="#fff" /></svg>
          </TaskCell>
          <TaskCell $w={20}>
            <svg width="14" height="14" viewBox="0 0 14 14" fill="none" stroke="#fff" strokeWidth="1.1"><path d="M1 13.500A12 12 0 0 1 13 2" opacity=".6" /><path d="M4 13.500A9 9 0 0 1 13 5.200M7 13.500a6 6 0 0 1 6-5.200" /><circle cx="11.5" cy="12.200" r="1.300" fill="#fff" stroke="none" /></svg>
          </TaskCell>
          <TaskCell $w={26}>
            <svg width="17" height="14" viewBox="0 0 17 14" fill="none" stroke="#fff" strokeWidth="1.1"><path d="M.6 4.500h2.500l3.400-3v11l-3.400-3H.6zM8.500 5q1.300 2 0 4M10.800 3.300q2.400 3.700 0 7.400M13.200 1.500q3.500 5.500 0 11" /></svg>
          </TaskCell>
          <Clock>10:40 PM<br />8/20/2021</Clock>
          <TaskCell $w={49} $pr={8}>
            <Svg s={16} sw={1.2} strokeLinejoin="miter"><path d="M.6 1h14.800v11H10.500L8 14.700 5.500 12H.6z" /></Svg>
          </TaskCell>
          <ShowDesktop />
        </Taskbar>
      </Screen>
    </>
  );
}
